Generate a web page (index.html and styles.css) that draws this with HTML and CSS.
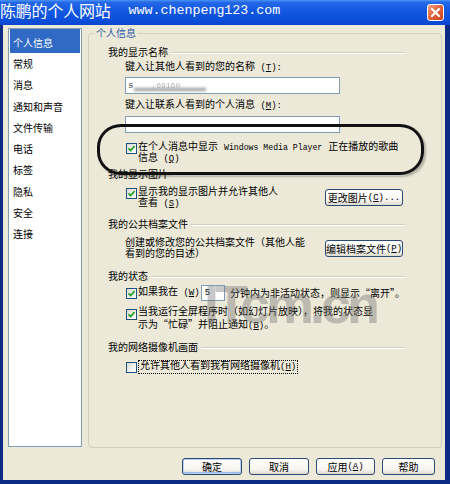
FILE: index.html
```html
<!DOCTYPE html>
<html lang="zh-CN">
<head>
<meta charset="utf-8">
<title>选项</title>
<link rel="stylesheet" href="styles.css">
</head>
<body>
<div class="window">
  <div class="titlebar">
    <span class="title-cn">陈鹏的个人网站</span>
    <span class="title-url">www.chenpeng123.com</span>
    <span class="close-btn"><svg width="15" height="15" viewBox="0 0 15 15"><path d="M4 4 L11 11 M11 4 L4 11" stroke="#fff" stroke-width="2.2" stroke-linecap="round"/></svg></span>
  </div>
  <div class="client">
    <div class="main">
      <ul class="nav">
        <li class="sel">个人信息</li>
        <li>常规</li>
        <li>消息</li>
        <li>通知和声音</li>
        <li>文件传输</li>
        <li>电话</li>
        <li>标签</li>
        <li>隐私</li>
        <li>安全</li>
        <li>连接</li>
      </ul>
      <fieldset class="group">
        <legend class="legend">个人信息</legend>
        <div class="gbody">
          <div class="sec-head h1"><span>我的显示名称</span></div>
          <div class="label l1">键入让其他人看到的您的名称<span class="acc"> (<u>T</u>):</span></div>
          <div class="textbox in1"><span class="nm-a">s</span><span class="nm-b">,69160</span><span class="smudge"></span></div>
          <div class="label l2">键入让联系人看到的个人消息<span class="acc"> (<u>M</u>):</span></div>
          <div class="textbox in2"></div>

          <div class="cbrow cb1">
            <span class="cb on"><svg width="9" height="9" viewBox="0 0 9 9"><path d="M1.5 4.3 L3.6 6.5 L7.6 2.2" stroke="#21A121" stroke-width="1.7" fill="none"/></svg></span>
            <span class="cbtext">在个人消息中显示 <span class="wmp">Windows Media Player</span> 正在播放的歌曲<br>信息<span class="acc"> (<u>Q</u>)</span></span>
          </div>

          <div class="sec-head h2"><span>我的显示图片</span></div>
          <div class="cbrow cb2">
            <span class="cb on"><svg width="9" height="9" viewBox="0 0 9 9"><path d="M1.5 4.3 L3.6 6.5 L7.6 2.2" stroke="#21A121" stroke-width="1.7" fill="none"/></svg></span>
            <span class="cbtext">显示我的显示图片并允许其他人<br>查看<span class="acc"> (<u>S</u>)</span></span>
            <span class="btn side-btn b1">更改图片<span class="acc"> (<u>C</u>)...</span></span>
          </div>

          <div class="sec-head h3"><span>我的公共档案文件</span></div>
          <div class="pfrow">
            <span class="pftext">创建或修改您的公共档案文件（其他人能<br>看到的您的目述）</span>
            <span class="btn side-btn b2">编辑档案文件<span class="acc">(<u>P</u>)</span></span>
          </div>

          <div class="sec-head h4"><span>我的状态</span></div>
          <div class="cbrow cb3">
            <span class="cb on"><svg width="9" height="9" viewBox="0 0 9 9"><path d="M1.5 4.3 L3.6 6.5 L7.6 2.2" stroke="#21A121" stroke-width="1.7" fill="none"/></svg></span>
            <span class="cbtext one">如果我在<span class="acc"> (<u>W</u>)</span></span>
            <span class="mins">5</span>
            <span class="cbtext one after">分钟内为非活动状态，则显示<span class="q">“</span>离开<span class="q">”</span>。</span>
          </div>
          <div class="cbrow cb4">
            <span class="cb on"><svg width="9" height="9" viewBox="0 0 9 9"><path d="M1.5 4.3 L3.6 6.5 L7.6 2.2" stroke="#21A121" stroke-width="1.7" fill="none"/></svg></span>
            <span class="cbtext tight">当我运行全屏程序时（如幻灯片放映），将我的状态显<br>示为<span class="q">“</span>忙碌<span class="q">”</span>并阻止通知<span class="acc">(<u>B</u>)</span>。</span>
          </div>

          <div class="sec-head h5"><span>我的网络摄像机画面</span></div>
          <div class="cbrow cb5">
            <span class="cb"></span>
            <span class="cbtext one focus">允许其他人看到我有网络摄像机<span class="acc">(<u>H</u>)</span></span>
          </div>
        </div>
      </fieldset>
    </div>
    <div class="buttons">
      <span class="btn dlg def">确定</span>
      <span class="btn dlg">取消</span>
      <span class="btn dlg w59">应用<span class="acc">(<u>A</u>)</span></span>
      <span class="btn dlg w53">帮助</span>
    </div>
  </div>
  <div class="oval"></div>
  <div class="watermark">ITcm.cn</div>
</div>
</body>
</html>
```

FILE: styles.css
```css
* { box-sizing: border-box; }
html, body { margin: 0; padding: 0; }
body {
  width: 450px;
  height: 484px;
  overflow: hidden;
  background: #ECE9D8;
  font-family: "Liberation Mono", "Noto Sans CJK SC", monospace;
  font-size: 10px;
  color: #000;
}
.window {
  position: relative;
  width: 450px;
  height: 484px;
  display: flex;
  flex-direction: column;
}
.titlebar {
  flex: none;
  height: 25px;
  display: flex;
  align-items: flex-start;
  color: #fff;
  background: linear-gradient(#4a92f7 0%, #2468e8 10%, #1257e0 45%, #0b4fdb 80%, #0a46cc 100%);
}
.title-cn {
  font-family: "Noto Sans CJK SC", sans-serif;
  font-size: 16px;
  line-height: 21px;
  letter-spacing: -0.2px;
}
.title-url {
  font-family: "Liberation Mono", monospace;
  font-size: 13.3px;
  line-height: 21px;
  margin-left: 18px;
}
.close-btn {
  margin: 4px 6px 0 auto;
  width: 17px;
  height: 17px;
  border: 1px solid #fff;
  border-radius: 3px;
  background: linear-gradient(135deg, #f0a283 0%, #e2663f 45%, #c9411f 100%);
  display: flex;
  align-items: center;
  justify-content: center;
}
.client {
  flex: 1;
  display: flex;
  flex-direction: column;
  border-left: 3px solid #0d2a84;
  border-right: 5px solid #0d2a84;
  border-bottom: 4px solid #0d2a84;
  padding: 2px 3px 0 5px;
}
.main {
  display: flex;
  gap: 6px;
  height: 421px;
}
.nav {
  list-style: none;
  margin: 1px 0 0 0;
  padding: 0;
  width: 74px;
  height: 419px;
  background: #fff;
  border: 1px solid #7F9DB9;
  font-family: "Noto Sans CJK SC", sans-serif;
}
.nav li {
  margin: 0 1px;
  padding-left: 3px;
  height: 21.3px;
  line-height: 21.3px;
}
.nav li.sel {
  height: 24px;
  padding-top: 3px;
  line-height: 21px;
  background: #316AC5;
  color: #fff;
}
.group {
  margin: 0;
  padding: 0;
  width: 354px;
  height: 421px;
  min-width: 0;
  border: 1px solid #D0D0BF;
  border-radius: 4px;
}
.legend {
  margin-left: 5px;
  padding: 0 2px;
  line-height: 12px;
  color: #2f57a8;
  font-family: "Noto Sans CJK SC", sans-serif;
}
.gbody {
  padding: 6px 36px 0 19px;
  display: flex;
  flex-direction: column;
}
.sec-head {
  display: flex;
  align-items: center;
  height: 14px;
  line-height: 14px;
  font-family: "Noto Sans CJK SC", sans-serif;
}
.sec-head::after {
  content: "";
  flex: 1;
  margin-left: 3px;
  border-top: 1px solid #D0D0BF;
  box-shadow: 0 1px 0 #fff;
}
.h2 { margin-top: 2px; }
.h3 { margin-top: 8px; }
.h4 { margin-top: 9px; }
.h5 { margin-top: 9px; }
.label {
  padding-left: 17px;
  height: 14px;
  line-height: 14px;
}
.l1 { margin-top: 2px; }
.l2 { margin-top: 5px; }
.acc { font-size: 9px; }
.textbox {
  position: relative;
  margin-left: 17px;
  width: 215px;
  height: 17px;
  background: #fff;
  border: 1px solid #7F9DB9;
  line-height: 15px;
  padding-left: 2px;
}
.in1 { margin-top: 2px; }
.in2 { margin-top: 3px; }
.nm-a { color: #333; font-size: 9px; }
.nm-b { color: #b5b5b5; font-size: 8px; margin-left: 18px; filter: blur(0.4px); }
.smudge {
  position: absolute;
  left: 8px;
  top: 10px;
  width: 72px;
  height: 3px;
  background: #9a9a9a;
  filter: blur(1.4px);
}
.cbrow {
  display: flex;
  align-items: flex-start;
  padding-left: 18px;
}
.cb {
  flex: none;
  width: 11px;
  height: 11px;
  margin-top: 1px;
  margin-right: 1px;
  border: 1px solid #1C5180;
  background: linear-gradient(135deg, #dcdcd4, #ffffff);
  display: flex;
  align-items: center;
  justify-content: center;
}
.cbtext {
  line-height: 11px;
  white-space: nowrap;
}
.cbtext.tight { line-height: 10.5px; }
.wmp { font-size: 8.2px; }
.q { font-family: "Noto Sans CJK SC", sans-serif; }
.cb1 { margin-top: 9px; }
.cb2 { margin-top: 6px; height: 22px; }
.cb3 { margin-top: 2px; height: 16px; align-items: center; }
.cb3 .cb { margin-top: 0; }
.cb4 { margin-top: 7px; }
.cb5 { margin-top: 6px; height: 14px; align-items: center; }
.cb5 .cb { margin-top: 0; }
.mins {
  width: 25px;
  height: 16px;
  margin-left: 1px;
  background: #fff;
  border: 1px solid #7F9DB9;
  line-height: 14px;
  padding-left: 3px;
  font-size: 9px;
}
.after { margin-left: 5px; }
.focus {
  border: 1px dotted #000;
  padding: 0 1px;
  line-height: 11px;
}
.btn {
  display: flex;
  align-items: center;
  justify-content: center;
  height: 17px;
  border: 1px solid #2b4a74;
  border-radius: 3px;
  background: linear-gradient(#ffffff 0%, #f5f4ef 70%, #dcd8cc 100%);
  white-space: nowrap;
  font-family: "Noto Sans CJK SC", "Liberation Mono", sans-serif;
}
.btn .acc { font-family: "Liberation Mono", monospace; }
.side-btn {
  margin-left: auto;
  margin-right: 2px;
  width: 78px;
}
.b1 { margin-top: 2px; }
.pfrow {
  display: flex;
  align-items: flex-start;
  padding-left: 17px;
  margin-top: 8px;
  height: 21px;
}
.pftext { line-height: 10.5px; white-space: nowrap; }
.b2 { margin-top: 1px; }
.buttons {
  display: flex;
  justify-content: flex-end;
  gap: 7px;
  margin-top: 10px;
  padding-right: 7px;
}
.dlg { width: 60px; }
.dlg.w59 { width: 59px; }
.dlg.w53 { width: 53px; }
.def { box-shadow: inset 0 0 0 1px #bcd1f1, inset 0 -1px 0 1px #9db8e6; }
.oval {
  position: absolute;
  left: 97px;
  top: 124px;
  width: 327px;
  height: 51px;
  border: 3px solid #111;
  border-radius: 24px / 23px;
  box-shadow: 2px 2px 2px rgba(0,0,0,0.25);
}
.watermark {
  position: absolute;
  left: 204px;
  top: 277px;
  font-family: "Liberation Sans", sans-serif;
  font-weight: bold;
  font-size: 54px;
  line-height: 54px;
  letter-spacing: -4px;
  color: rgba(110, 110, 110, 0.38);
}
```
